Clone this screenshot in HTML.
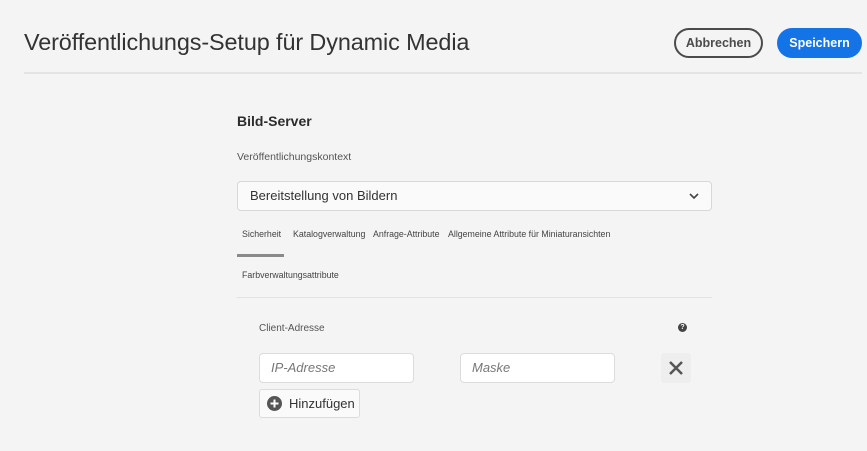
<!DOCTYPE html>
<html><head><meta charset="utf-8"><style>
*{box-sizing:border-box;margin:0;padding:0}
body{width:867px;height:451px;background:#f4f4f4;font-family:"Liberation Sans",sans-serif;color:#2c2c2c;position:relative;overflow:hidden}
.a{position:absolute}
h1{position:absolute;left:24px;top:29px;font-size:23.4px;font-weight:normal;color:#333;letter-spacing:-0.1px}
.hr{position:absolute;left:24px;top:72px;width:838px;height:2px;background:#e4e4e4}
.btn{position:absolute;top:28px;height:30px;border-radius:15px;font-size:12.5px;font-weight:bold;text-align:center;line-height:26px}
.inp{position:absolute;background:#fff;border:1px solid #dcdcdc;border-radius:4px;font-size:13px;font-style:italic;color:#777;padding-left:11px;line-height:28px}
.tab{position:absolute;top:229px;font-size:8.8px;color:#444}
</style></head><body>
<h1>Veröffentlichungs-Setup für Dynamic Media</h1>
<div class="btn" style="left:674px;width:89px;border:2px solid #4b4b4b;color:#4b4b4b">Abbrechen</div>
<div class="btn" style="left:777px;width:85px;background:#1473e6;color:#fff;line-height:30px">Speichern</div>
<div class="hr"></div>
<div class="a" style="left:237px;top:113px;font-size:14px;font-weight:bold">Bild-Server</div>
<div class="a" style="left:237px;top:151px;font-size:10.5px;color:#555">Veröffentlichungskontext</div>
<div class="a" style="left:237px;top:181px;width:475px;height:30px;background:#fafafa;border:1px solid #d8d8d8;border-radius:4px;font-size:13px;line-height:28px;padding-left:12px;color:#333">Bereitstellung von Bildern
<svg class="a" style="right:12px;top:10px" width="10" height="8" viewBox="0 0 10 8"><path d="M1 2l4 4 4-4" stroke="#444" stroke-width="1.6" fill="none"/></svg></div>
<div class="tab" style="left:242px">Sicherheit</div>
<div class="tab" style="left:293px">Katalogverwaltung</div>
<div class="tab" style="left:373px">Anfrage-Attribute</div>
<div class="tab" style="left:448px">Allgemeine Attribute für Miniaturansichten</div>
<div class="a" style="left:237px;top:254px;width:47px;height:3px;background:#8a8a8a"></div>
<div class="tab" style="left:242px;top:270px">Farbverwaltungsattribute</div>
<div class="a" style="left:237px;top:297px;width:475px;height:1px;background:#e2e2e2"></div>
<div class="a" style="left:259px;top:323px;font-size:10px;color:#555">Client-Adresse</div>
<div class="a" style="left:678px;top:323px;width:9px;height:9px;border-radius:50%;background:#444;color:#fff;font-size:7px;font-weight:bold;text-align:center;line-height:9px">?</div>
<div class="inp" style="left:259px;top:353px;width:155px;height:30px">IP-Adresse</div>
<div class="inp" style="left:460px;top:353px;width:155px;height:30px">Maske</div>
<div class="a" style="left:661px;top:353px;width:30px;height:30px;background:#eee;border-radius:3px"><svg width="30" height="30"><path d="M9 9l12 12M21 9L9 21" stroke="#555" stroke-width="2.5"/></svg></div>
<div class="a" style="left:259px;top:389px;width:101px;height:29px;background:#fafafa;border:1px solid #dcdcdc;border-radius:3px;font-size:13px;line-height:27px;padding-left:29px;color:#333">Hinzufügen
<svg class="a" style="left:7px;top:6px" width="15" height="15"><circle cx="7.5" cy="7.5" r="7.5" fill="#555"/><path d="M7.5 3.5v8M3.5 7.5h8" stroke="#fff" stroke-width="2"/></svg></div>
</body></html>
